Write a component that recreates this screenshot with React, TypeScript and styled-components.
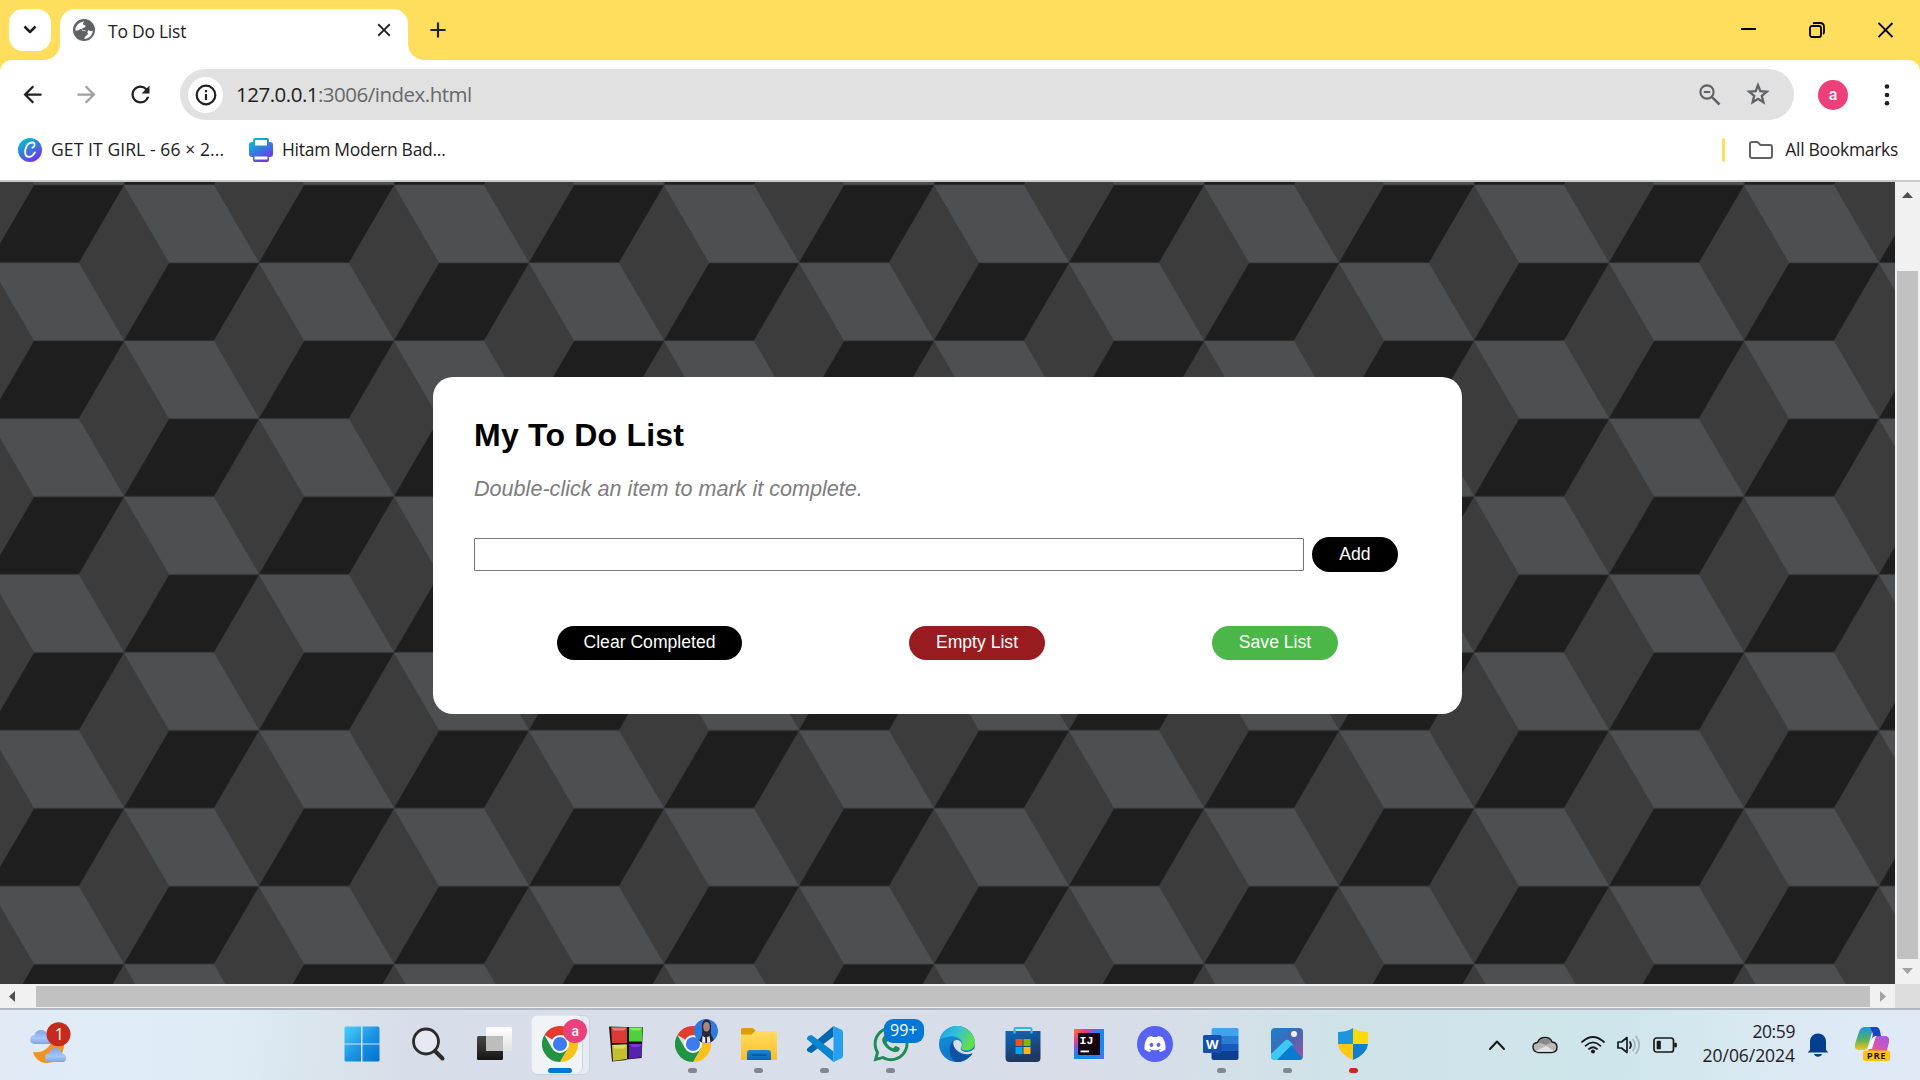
import React from "react";
import styled, { createGlobalStyle, css } from "styled-components";
import { MdAdd, MdArrowBack, MdArrowForward, MdClose, MdRefresh } from "react-icons/md";
import { FaDiscord, FaWhatsapp } from "react-icons/fa";

const ui = `"Open Sans", "Noto Sans", sans-serif`;
const page = `"Liberation Sans", Arial, sans-serif`;
const yellow = "#ffde5d";

const Global = createGlobalStyle`
  * { box-sizing: border-box; }
  body { margin: 0; overflow: hidden; background: #fff; }
  svg { display: block; flex: none; }
`;

const Screen = styled.div`
  width: 1920px;
  height: 1080px;
  display: flex;
  flex-direction: column;
  overflow: hidden;
  font-family: ${ui};
  color: #1f2023;
`;

const TitleBar = styled.header`
  height: 60px;
  flex: none;
  display: flex;
  padding: 9px 0 0 9px;
  background: ${yellow};
`;

const TabSearch = styled.button`
  width: 42px;
  height: 42px;
  padding: 0;
  border: 0;
  border-radius: 14px;
  background: #fff;
  display: grid;
  place-items: center;
`;

const flare = css`
  content: "";
  position: absolute;
  bottom: 0;
  width: 16px;
  height: 16px;
`;

const Tab = styled.div`
  position: relative;
  width: 348px;
  height: 51px;
  margin-left: 9px;
  padding: 0 13px 9px 13px;
  border-radius: 15px 15px 0 0;
  background: #fff;
  display: flex;
  align-items: center;
  color: #5f6368;
  &::before {
    ${flare}
    left: -16px;
    background: radial-gradient(circle at 0 0, transparent 15.5px, #fff 16.2px);
  }
  &::after {
    ${flare}
    right: -16px;
    background: radial-gradient(circle at 100% 0, transparent 15.5px, #fff 16.2px);
  }
`;

const Label = styled.span<{ $size: number; $spacing?: number; $color?: string }>`
  font-size: ${(p) => p.$size}px;
  letter-spacing: ${(p) => p.$spacing ?? 0}px;
  color: ${(p) => p.$color ?? "#1f2023"};
  white-space: nowrap;
  line-height: 24px;
`;

const TabTitle = styled(Label)`
  flex: 1;
  margin-left: 13px;
  padding-top: 2px;
`;

const NewTab = styled.div`
  margin: 8px 0 0 17px;
  color: #1f2023;
`;

const WindowButtons = styled.div`
  margin-left: auto;
  display: flex;
  height: 42px;
`;

const WindowButton = styled.div`
  width: 68.5px;
  display: grid;
  place-items: center;
`;

const ToolbarBack = styled.div`
  flex: none;
  background: ${yellow};
`;

const Toolbar = styled.div`
  height: 69px;
  padding: 0 20px 0 0;
  border-radius: 12px 12px 0 0;
  background: #fff;
  display: flex;
  align-items: center;
`;

const NavButton = styled.div<{ $off?: boolean }>`
  width: 54px;
  display: flex;
  justify-content: center;
  color: ${(p) => (p.$off ? "#a0a0a2" : "#1f2023")};
`;

const NavGroup = styled.div`
  display: flex;
  padding-left: 5px;
  width: 180px;
`;

const Omnibox = styled.div`
  width: 1614px;
  height: 51px;
  border-radius: 26px;
  background: #e1e1e1;
  display: flex;
  align-items: center;
  padding: 0 24px 0 8px;
  color: #5f6164;
`;

const SiteInfo = styled.div`
  width: 35px;
  height: 36px;
  margin-right: 13px;
  border-radius: 50%;
  background: #fff;
  display: grid;
  place-items: center;
`;

const Url = styled(Label)`
  flex: 1;
  padding-bottom: 2px;
  b { font-weight: 400; color: #1f2023; }
`;

const StarSlot = styled.div`
  margin: 0 0 2px 25px;
`;

const Avatar = styled.div<{ $size: number; $font: number }>`
  width: ${(p) => p.$size}px;
  height: ${(p) => p.$size}px;
  border-radius: 50%;
  background: #ec407a;
  color: #fff;
  font: 500 ${(p) => p.$font}px/1 Roboto, sans-serif;
  display: grid;
  place-items: center;
`;

const Profile = styled.div`
  margin: 0 36px 0 24px;
`;

const Bookmarks = styled.nav`
  height: 51px;
  flex: none;
  padding: 0 22px 9px 18px;
  background: #fff;
  display: flex;
  align-items: center;
  ${Label} { padding-bottom: 2px; }
`;

const Bookmark = styled.div<{ $width: number }>`
  width: ${(p) => p.$width}px;
  display: flex;
  align-items: center;
  gap: 9px;
`;

const AllBookmarks = styled.div`
  margin-left: auto;
  display: flex;
  align-items: center;
  gap: 12px;
  &::before {
    content: "";
    flex: none;
    width: 3px;
    height: 24px;
    margin-right: 12px;
    border-radius: 2px;
    background: ${yellow};
  }
`;

const Viewport = styled.div`
  flex: none;
  height: 830px;
  border-top: 2px solid #c8cacc;
  border-bottom: 2px solid #b0b7c0;
  display: grid;
  grid-template: 802px 24px / 1895px 25px;
`;

const Page = styled.main`
  position: relative;
  overflow: hidden;
  background: #3c3c3c;
  padding: 195px 0 0 433px;
`;

const Backdrop = styled.svg`
  position: absolute;
  inset: 0;
`;

const Card = styled.section`
  position: relative;
  width: 1029px;
  height: 337px;
  padding: 38px 64px 0 41px;
  border-radius: 20px;
  background: #fff;
  font-family: ${page};
`;

const Heading = styled.h1`
  margin: 0;
  font-size: 32px;
  line-height: 40px;
  letter-spacing: 0.22px;
  color: #000;
`;

const Hint = styled.p`
  margin: 21px 0 0;
  font-size: 21.6px;
  line-height: 26px;
  font-style: italic;
  color: #7d7d7d;
`;

const EntryRow = styled.div`
  display: flex;
  align-items: center;
  gap: 8px;
  margin-top: 35px;
`;

const Entry = styled.input`
  width: 830px;
  height: 33px;
  padding: 0;
  border: 1px solid #767676;
  border-radius: 1px;
  background: #fff;
`;

const Pill = styled.button<{ $bg?: string; $w: number; $h?: number }>`
  width: ${(p) => p.$w}px;
  height: ${(p) => p.$h ?? 34}px;
  padding: 0 0 ${(p) => (p.$h ? 1 : 3)}px;
  border: 0;
  border-radius: 18px;
  background: ${(p) => p.$bg ?? "#000"};
  color: #fff;
  font: 17.6px/20px ${page};
  white-space: nowrap;
`;

const Actions = styled.div`
  display: flex;
  justify-content: space-between;
  margin: 54px 60px 0 83px;
`;

const VScroll = styled.div`
  background: #f1f1f1;
  display: flex;
  flex-direction: column;
  align-items: center;
  justify-content: space-between;
  padding: 10px 0 10px;
`;

const VThumb = styled.div`
  width: 21px;
  height: 688px;
  margin-top: 64px;
  background: #c1c1c1;
`;

const HScroll = styled.div`
  background: #f1f1f1;
  display: flex;
  align-items: center;
  justify-content: space-between;
  padding: 0 9px;
`;

const HThumb = styled.div`
  width: 1834px;
  height: 21px;
  margin-left: 11px;
  background: #c1c1c1;
`;

const Corner = styled.div`
  background: #dcdcdc;
`;

const Taskbar = styled.footer`
  height: 70px;
  display: flex;
  align-items: center;
  background: linear-gradient(95deg, #e0ebf6 0, #dfecf6 230px, #dae6ee 300px, #d8dee9 410px, #d8deea 800px, #d8dde8 1100px, #cfe3e9 1350px, #cee6eb 1620px, #dbe9f3 1780px, #e0eaf7 1920px);
`;

const Weather = styled.div`
  width: 329px;
  padding: 0 0 5px 28px;
`;

const Apps = styled.div`
  display: flex;
`;

const AppCell = styled.div<{ $active?: boolean }>`
  position: relative;
  width: 66.1px;
  height: 70px;
  display: grid;
  place-items: center;
  padding-bottom: 2px;
  ${(p) =>
    p.$active &&
    css`
      &::before, &::after {
        content: "";
        position: absolute;
        top: 5px;
        left: 4px;
        height: 58px;
        width: 57px;
        border: 1px solid #cbd2e0;
        border-radius: 6px;
        background: rgba(255, 255, 255, 0.4);
      }
      &::after { width: 51px; border-width: 0 1px 0 0; }
    `}
  & > svg { position: relative; z-index: 1; }
`;

const Running = styled.i<{ $w: number; $c: string }>`
  position: absolute;
  z-index: 2;
  bottom: 7px;
  left: calc(50% - ${(p) => p.$w / 2}px);
  width: ${(p) => p.$w}px;
  height: 5px;
  border-radius: 3px;
  background: ${(p) => p.$c};
`;

const AppBadge = styled.div<{ $left: number }>`
  position: absolute;
  z-index: 3;
  top: 9px;
  left: ${(p) => p.$left}px;
`;

const CountBadge = styled.div`
  width: 40px;
  height: 24px;
  border-radius: 9px;
  background: #0078d7;
  color: #fff;
  font: 16px/23px ${ui};
  text-align: center;
`;

const Tray = styled.div`
  margin-left: auto;
  height: 70px;
  padding-right: 29px;
  display: flex;
  align-items: center;
`;

const TrayItem = styled.div<{ $ml?: number }>`
  margin-left: ${(p) => p.$ml ?? 0}px;
`;

const Clock = styled.div`
  width: 118px;
  margin-top: -5px;
  display: flex;
  flex-direction: column;
  align-items: flex-end;
`;

const s = { fill: "none", strokeLinecap: "round" as const, strokeLinejoin: "round" as const };

function Cubes() {
  return (
    <Backdrop width="1895" height="802">
      <defs>
        <pattern id="cubes" width="270" height="155.85" patternUnits="userSpaceOnUse" patternTransform="translate(-11 3)">
          <path fill="#3c3c3c" d="M0 0h270v156H0z" />
          <path fill="#1e1e1e" d="M45 .2H135L90 77.500H0zM180 78.100H270L225 155.400H135z" />
          <path fill="#4e4f51" d="M135 .2H225L270 77.500H180zM0 78.100H90L135 155.400H45z" />
        </pattern>
      </defs>
      <rect width="1895" height="802" fill="url(#cubes)" />
    </Backdrop>
  );
}

const GlobeIcon = () => (
  <svg width="22" height="22">
    <circle cx="11" cy="11" r="11" fill="#5f6368" />
    <path fill="#fff" d="M2.300 11.500C2.300 7 6 2.800 11.500 2.500 9.500 4 9.300 6.300 12.600 6.500c.2 2.700-3.800 1.800-4 4.300 1.600 2.400 6 .4 6.300 3.700-.1 2.300-3.200 2-3.600 5.300 4.600 0 8.300-3.600 8.500-8.300-2 1-3.500.6-4.600-.7.300 1.700-.5 2.400-1.700 1.900-1.500-2.400-5.300-1-5.200-2.900-2 .8-4.200 2.500-6 1.700z" />
  </svg>
);

const ZoomOutIcon = () => (
  <svg width="22" height="22" fill="none" stroke="currentColor" strokeWidth="2.100">
    <circle cx="8" cy="8" r="6.600" />
    <path d="m12.800 12.800 7.700 7.700" strokeWidth="2.500" />
    <path d="M4.800 8h6.400" />
  </svg>
);

const StarIcon = () => (
  <svg width="24" height="24" fill="none" stroke="currentColor" strokeWidth="2.300">
    <path d="m12 3.200 2.300 6 6.500.5-5 4.200 1.600 6.400L12 16.900l-5.400 3.400 1.600-6.400-5-4.200 6.500-.5z" />
  </svg>
);

const ChromeIcon = () => (
  <svg width="36" height="36" viewBox="0 0 36 36">
    <path fill="#e33b2e" d="M18 18 2.4 9A18 18 0 0 1 33.6 9z" />
    <path fill="#fbc116" d="M18 9h15.6A18 18 0 0 1 18 36l7.8-13.5z" />
    <path fill="#229342" d="M2.4 9A18 18 0 0 0 18 36l7.8-13.5L18 18l-7.8 4.5z" />
    <circle cx="18" cy="18" r="9" fill="#fff" />
    <circle cx="18" cy="18" r="7.1" fill="#3d7cf0" />
  </svg>
);

const StartIcon = () => (
  <svg width="36" height="36">
    <defs>
      <linearGradient id="st" x1="0" y1="0" x2="36" y2="36" gradientUnits="userSpaceOnUse">
        <stop stopColor="#4fd0ff" />
        <stop offset=".5" stopColor="#1c96e2" />
        <stop offset="1" stopColor="#0070d2" />
      </linearGradient>
    </defs>
    <path fill="url(#st)" d="M2 .5h15v17H.5V2Q.5.5 2 .5zM18.500 .5H34q1.500 0 1.500 1.500v15.500h-17zM.5 18.500H17v17H2Q.5 35.500.5 34zM18.500 18.500h17V34q0 1.500-1.500 1.500h-15.500z" />
  </svg>
);

const SearchIcon = () => (
  <svg width="36" height="36" {...s} stroke="#2b2b2b">
    <circle cx="16" cy="15.500" r="12.500" strokeWidth="2.800" fill="#e6e9f2" />
    <path d="m25.500 25.500 7 7" strokeWidth="4" />
  </svg>
);

const TaskViewIcon = () => (
  <svg width="36" height="36">
    <defs>
      <linearGradient id="tv" x2="0" y2="1"><stop stopColor="#494845" /><stop offset="1" stopColor="#151515" /></linearGradient>
      <linearGradient id="tw" x2="0" y2="1"><stop stopColor="#fff" /><stop offset="1" stopColor="#e2e2e2" /></linearGradient>
    </defs>
    <rect x="1" y="10" width="26" height="24" rx="1.500" fill="url(#tv)" />
    <rect x="10" y="1" width="26" height="24" rx="1.500" fill="url(#tw)" />
    <path fill="#bdbdbd" d="M10 10h17v15H10z" />
  </svg>
);

const BlocksIcon = () => (
  <svg width="36" height="36">
    <path fill="#171310" d="M1 .5 17.500 1l1 33L4 35.500z" />
    <path fill="#171310" d="M17 1h18l-1.500 31-15 1.500z" />
    <path fill="#da3a35" d="M3 1.500h16v15.500H4z" />
    <path fill="#ee7770" d="M3 1.500h16l-3 3H6z" />
    <path fill="#4fd03c" d="M21 1.500h13.500l-.5 14H21z" />
    <path fill="#82ea66" d="M21 1.500h13.500l-3 3H24z" />
    <path fill="#c3c02d" d="m4 19 15-.5V33L5 35z" />
    <path fill="#dedd61" d="m4 19 15-.5-3 4H7z" />
    <path fill="#5424ae" d="M21 18h13l-.5 13L21 33z" />
    <path fill="#6f3ed0" d="M21 18h13l-3 3h-7z" />
  </svg>
);

const FolderIcon = () => (
  <svg width="36" height="36">
    <defs>
      <linearGradient id="fo" x2="0" y2="1"><stop stopColor="#ffdc61" /><stop offset="1" stopColor="#fdbe28" /></linearGradient>
      <linearGradient id="fb" x2="0" y2="1"><stop stopColor="#1687d9" /><stop offset="1" stopColor="#0b65b4" /></linearGradient>
    </defs>
    <path fill="#dc9e08" d="M0 9V3.500Q0 2 1.500 2H11q1 0 2 1l3 3-4 4z" />
    <path fill="url(#fo)" d="M0 8.500h10.500L14 5h20.500Q36 5 36 6.500V34H0z" />
    <path fill="url(#fb)" d="M6 34v-7q0-3 3-3h18q3 0 3 3v7z" />
    <path stroke="#0a4f92" strokeWidth="1.500" d="M10.500 29h15" />
  </svg>
);

const CodeIcon = () => (
  <svg width="36" height="36">
    <path fill="#0067ad" d="M26.500 0v10.500L4.500 27 1.500 26 0 24.500q-.8-1 .3-2z" />
    <path fill="#0a86cf" d="M26.500 36V25.500L4.500 9 1.500 10 0 11.500q-.8 1 .3 2z" />
    <path fill="#26a0ee" d="m26.500 0 8 3.700q1.500.8 1.500 2.500v23.600q0 1.700-1.500 2.500l-8 3.700z" />
  </svg>
);

const EdgeIcon = () => (
  <svg width="36" height="36">
    <defs>
      <linearGradient id="e1" x2="1" y2=".4"><stop stopColor="#1e9be0" /><stop offset=".5" stopColor="#2fc2da" /><stop offset="1" stopColor="#65dd4b" /></linearGradient>
      <linearGradient id="e2" x2=".4" y2="1"><stop stopColor="#1594db" /><stop offset="1" stopColor="#1271c9" /></linearGradient>
    </defs>
    <circle cx="18" cy="18" r="18" fill="url(#e2)" />
    <path fill="url(#e1)" d="M.4 14.500A18 18 0 0 1 36 16.500c0 5-4 8-8.500 8-4 0-5.500-1.500-5.500-2.500 1-1 1.300-2 1.300-3.500 0-6-7-9-12.300-8C6 11.500 2 12 .4 14.500z" />
    <path fill="#10529f" d="M14.500 14.500C9 19 9 30 16.500 35.900 23 37 31 32 34 27c-7 3.500-19.500 1.500-19.500-12.500z" />
    <path fill="#d8dde8" d="M17.500 14c5 0 6.500 4.500 4.500 7.500-1.500 2.500 2.500 5 6.500 4.500 2.500-.3 5-1.500 7-3.500l1 6-3.500-1.200C24 31 12.500 23 14.500 15.500q1.200-1.500 3-1.500z" />
  </svg>
);

const StoreIcon = () => (
  <svg width="36" height="36">
    <defs><linearGradient id="so" x2=".3" y2="1"><stop stopColor="#0a6abf" /><stop offset="1" stopColor="#21365e" /></linearGradient></defs>
    <path fill="none" stroke="#2cb6ec" strokeWidth="2" d="M9.500 8V3q0-1 1-1h15q1 0 1 1v5" />
    <path fill="url(#so)" d="M.5 5h8v2.500h2V5h15v2.500h2V5h8v27q0 4-4 4h-27q-4 0-4-4z" />
    <path fill="#f1511b" d="M10.500 13h7v7h-7z" /><path fill="#80bb02" d="M18.500 13h7v7h-7z" />
    <path fill="#05a6f0" d="M10.500 21h7v7h-7z" /><path fill="#ffba08" d="M18.500 21h7v7h-7z" />
  </svg>
);

const IdeaIcon = () => (
  <svg width="36" height="36">
    <defs><linearGradient id="ij" x2="1" y2="1"><stop stopColor="#fc801d" /><stop offset=".2" stopColor="#f13a7c" /><stop offset=".34" stopColor="#8b4fe6" /><stop offset=".45" stopColor="#1688f5" /><stop offset=".85" stopColor="#1f86f7" /><stop offset="1" stopColor="#7a5bea" /></linearGradient></defs>
    <path fill="url(#ij)" d="M3 3h30v30H3z" />
    <path fill="#160510" d="M7 7h22v22H7z" />
    <text x="8.500" y="18" fill="#fff" fontFamily="Liberation Mono, monospace" fontWeight="700" fontSize="11.500">IJ</text>
    <path fill="#fff" d="M9.500 24.500h8.500v1.800H9.500z" />
  </svg>
);

const DiscordIcon = () => (
  <svg width="36" height="36">
    <circle cx="18" cy="18" r="18" fill="#5662f3" />
    <FaDiscord x="6.500" y="6.500" size={23} color="#fff" />
  </svg>
);

const WordIcon = () => (
  <svg width="36" height="36">
    <path fill="#41a3ee" d="M8.500 4Q8.500 2 10.500 2h23.500q1.500 0 1.500 1.500V10h-27z" />
    <path fill="#2b7cd3" d="M8.500 10h27v8h-27z" /><path fill="#185abd" d="M8.500 18h27v7h-27z" />
    <path fill="#103f91" d="M8.500 25h27v7q0 2-2 2h-23q-2 0-2-2z" />
    <rect y="9" width="18.500" height="18" rx="1.500" fill="#174fae" />
    <text x="9.200" y="23" textAnchor="middle" fill="#fff" fontFamily="Open Sans, sans-serif" fontWeight="700" fontSize="13">W</text>
  </svg>
);

const PhotosIcon = () => (
  <svg width="36" height="36">
    <defs>
      <linearGradient id="ph" x2="1" y2="1"><stop stopColor="#1782cd" /><stop offset=".5" stopColor="#4568b5" /><stop offset="1" stopColor="#a44fa0" /></linearGradient>
      <clipPath id="pc"><rect x="2" y="2" width="32" height="32" rx="4" /></clipPath>
    </defs>
    <g clipPath="url(#pc)">
      <path fill="url(#ph)" d="M2 2h32v32H2z" />
      <path fill="#0a7bd2" d="m7 34 12-13.500q2-2 4 0L34 33v2z" />
      <path fill="#3ccaf4" d="m2 28 13.500-13q2.500-2.500 5 0l4.500 4.500q-2-1-4 1L8 34H2z" />
    </g>
    <circle cx="25" cy="8" r="3" fill="#f1f4fb" />
  </svg>
);

const ShieldIcon = () => (
  <svg width="36" height="36">
    <path fill="#1e96dc" d="M18 2Q12 6 3 6v12h15z" /><path fill="#ffda08" d="M18 2q6 4 15 4v12H18z" />
    <path fill="#ffc814" d="M3 18q1 10 15 16V18z" /><path fill="#0f80cf" d="M33 18q-1 10-15 16V18z" />
  </svg>
);

const Portrait = () => (
  <svg width="24" height="24">
    <defs><clipPath id="po"><circle cx="12" cy="12" r="12" /></clipPath></defs>
    <g clipPath="url(#po)">
      <path fill="#2d7be0" d="M0 0h24v24H0z" />
      <path fill="#2a2a36" d="M8 16V6q.5-5.500 4.500-5.500T17 6v9l4 9H4z" />
      <ellipse cx="12.500" cy="7.800" rx="3.300" ry="4.800" fill="#ab877b" />
      <path fill="#e8edf5" d="m8.500 17 3.500 2 3.500-2 1 7H8z" /><path fill="#1c2233" d="M11.300 18.500h1.800V24h-1.800z" />
    </g>
  </svg>
);

const WeatherIcon = () => (
  <svg width="44" height="44">
    <defs><linearGradient id="cl" x2="0" y2="1"><stop stopColor="#7fa6e8" /><stop offset=".6" stopColor="#a9c6f6" /><stop offset="1" stopColor="#7ea2e3" /></linearGradient></defs>
    <path fill="#f4921f" d="M5 31q14 2 20-13l11 0q1 10-3 16-6 9-16 8Q7 40 5 31z" />
    <path fill="url(#cl)" d="M6 23q-4-1-4-4.500T6.500 14Q8 9 13 9q6 0 6.500 6 5 .5 5 4.500T21 23z" />
    <path fill="url(#cl)" d="M21 41q-4-.5-4-4.500t4.500-4.500q1-5 6-5 5.500 0 6 5.500 4.500 0 4.500 4.500T34 41z" />
    <circle cx="30.500" cy="13.300" r="12" fill="#c42b1c" />
    <text x="31.300" y="19" textAnchor="middle" fill="#fff" fontFamily="Open Sans, sans-serif" fontSize="16">1</text>
  </svg>
);

const CanvaIcon = () => (
  <svg width="24" height="24">
    <defs><linearGradient id="ca" x1=".2" x2=".8" y2="1"><stop stopColor="#00c4cc" /><stop offset=".5" stopColor="#3976e0" /><stop offset="1" stopColor="#7d2ae8" /></linearGradient></defs>
    <circle cx="12" cy="12" r="12" fill="url(#ca)" />
    <path {...s} stroke="#fff" strokeWidth="1.800" d="M14.300 9.600c2.600-.4 3.400-4.900.2-5.100C9.500 4.300 6.200 11 7.300 15.700c1 4.700 6.800 4 9.600-1.300" />
  </svg>
);

const PrintIcon = () => (
  <svg width="24" height="24">
    <path fill="url(#ca)" d="M4 2q0-2 2-2h12q2 0 2 2v2h1q3 0 3 3v9q0 3-3 3h-1v3q0 2-2 2H6q-2 0-2-2v-3H3q-3 0-3-3V7q0-3 3-3h1z" />
    <path fill="#fff" d="M6 2h12v5.500H6zM5.500 18.500h13v3h-13z" />
  </svg>
);

const CopilotIcon = () => (
  <svg width="36" height="36">
    <defs>
      <linearGradient id="c1" x2="0" y2="1"><stop stopColor="#1499ea" /><stop offset=".5" stopColor="#4eae6a" /><stop offset="1" stopColor="#f2c613" /></linearGradient>
      <linearGradient id="c2" x1="1" x2="0" y2="1"><stop stopColor="#9b5bf0" /><stop offset=".5" stopColor="#d254b5" /><stop offset="1" stopColor="#f5714e" /></linearGradient>
    </defs>
    <path fill="url(#c1)" d="M10 0h11q-3 1-4.500 7L13 19q-1 4-5 4H4q-5 0-4-6L4 5q1.500-5 6-5z" />
    <path fill="#1746c0" d="M15 0h6q3 0 4 4l1 5h-4q-4 0-5.500 4L18 7z" />
    <path fill="url(#c2)" d="M22 9h8q5 0 4 6l-2 8q-1 3-5 3H8q5 0 6-4h3l3-10q.5-2 2-3z" />
    <path fill="#f4f6fa" d="m18 10 3-1-4 11q-.5 2-4 2z" />
    <rect x="8" y="23.500" width="27" height="10.500" rx="2" fill="#ffc20e" />
    <text x="21.500" y="32.300" textAnchor="middle" fill="#1a1a1a" fontFamily="Open Sans, sans-serif" fontWeight="700" fontSize="9.500" letterSpacing=".6">PRE</text>
  </svg>
);

const apps: { icon: React.ReactNode; active?: boolean; run?: string; badge?: React.ReactNode; left?: number }[] = [
  { icon: <StartIcon /> },
  { icon: <SearchIcon /> },
  { icon: <TaskViewIcon /> },
  { icon: <ChromeIcon />, active: true, run: "#0078d7", badge: <Avatar $size={24} $font={14}>a</Avatar>, left: 36 },
  { icon: <BlocksIcon /> },
  { icon: <ChromeIcon />, run: "#83868e", badge: <Portrait />, left: 35 },
  { icon: <FolderIcon />, run: "#83868e" },
  { icon: <CodeIcon />, run: "#83868e" },
  { icon: <FaWhatsapp size={40} color="#1d8b57" />, run: "#83868e", badge: <CountBadge>99+</CountBadge>, left: 26 },
  { icon: <EdgeIcon /> },
  { icon: <StoreIcon /> },
  { icon: <IdeaIcon /> },
  { icon: <DiscordIcon /> },
  { icon: <WordIcon />, run: "#83868e" },
  { icon: <PhotosIcon />, run: "#83868e" },
  { icon: <ShieldIcon />, run: "#c42b1c" },
];

export default function App() {
  return (
    <Screen>
      <Global />
      <TitleBar>
        <TabSearch>
          <svg width="14" height="10" {...s} stroke="#1f2023" strokeWidth="2.500" strokeLinecap="butt"><path d="m1.500 1.500 5.500 5.500 5.500-5.500" /></svg>
        </TabSearch>
        <Tab>
          <GlobeIcon />
          <TabTitle $size={17.5} $spacing={-0.25}>To Do List</TabTitle>
          <MdClose size={22} color="#1f2023" />
        </Tab>
        <NewTab><MdAdd size={26} /></NewTab>
        <WindowButtons>
          <WindowButton><svg width="16" height="16"><path d="M0 6h15v2H0z" /></svg></WindowButton>
          <WindowButton>
            <svg width="16" height="16" fill="none" stroke="#000" strokeWidth="1.800"><rect x="1" y="4" width="11" height="11" rx="2" /><path d="M4 1.500q.5-.5 2-.5h5q4 0 4 4v5q0 1.500-1 2" /></svg>
          </WindowButton>
          <WindowButton><svg width="16" height="16" stroke="#000" strokeWidth="1.800"><path d="m.5 1 14 14M14.500 1 .5 15" /></svg></WindowButton>
        </WindowButtons>
      </TitleBar>
      <ToolbarBack>
        <Toolbar>
          <NavGroup>
            <NavButton><MdArrowBack size={27} /></NavButton>
            <NavButton $off><MdArrowForward size={27} /></NavButton>
            <NavButton><MdRefresh size={27} /></NavButton>
          </NavGroup>
          <Omnibox>
            <SiteInfo>
              <svg width="22" height="22" fill="none" stroke="#1f2023" strokeWidth="2.200"><circle cx="11" cy="11" r="9.300" /><path d="M11 10v6M11 6v2.200" /></svg>
            </SiteInfo>
            <Url $size={20.5} $spacing={-0.5} $color="#66686b"><b>127.0.0.1</b>:3006/index.html</Url>
            <ZoomOutIcon />
            <StarSlot><StarIcon /></StarSlot>
          </Omnibox>
          <Profile><Avatar $size={30} $font={16}>a</Avatar></Profile>
          <svg width="6" height="24" fill="#1f2023"><circle cx="3" cy="3.500" r="2.300" /><circle cx="3" cy="12" r="2.300" /><circle cx="3" cy="20.300" r="2.300" /></svg>
        </Toolbar>
      </ToolbarBack>
      <Bookmarks>
        <Bookmark $width={231}><CanvaIcon /><Label $size={17.5} $spacing={0.1}>GET IT GIRL - 66 × 2...</Label></Bookmark>
        <Bookmark $width={220}><PrintIcon /><Label $size={17.5} $spacing={-0.28}>Hitam Modern Bad...</Label></Bookmark>
        <AllBookmarks>
          <svg width="24" height="18" {...s} stroke="#5f6164" strokeWidth="2"><path d="M1 15V3q0-2 2-2h5.500l3 3H21q2 0 2 2v9q0 2-2 2H3q-2 0-2-2z" /></svg>
          <Label $size={17.5} $spacing={-0.3}>All Bookmarks</Label>
        </AllBookmarks>
      </Bookmarks>

      <Viewport>
        <Page>
          <Cubes />
          <Card>
            <Heading>My To Do List</Heading>
            <Hint>Double-click an item to mark it complete.</Hint>
            <EntryRow>
              <Entry aria-label="New item" />
              <Pill $w={86} $h={35}>Add</Pill>
            </EntryRow>
            <Actions>
              <Pill $w={185}>Clear Completed</Pill>
              <Pill $w={136} $bg="#981b1f">Empty List</Pill>
              <Pill $w={126} $bg="#4bb749">Save List</Pill>
            </Actions>
          </Card>
        </Page>
        <VScroll>
          <svg width="11" height="6"><path fill="#505050" d="M0 6 5.500 0 11 6z" /></svg>
          <VThumb />
          <svg width="11" height="6"><path fill="#a3a3a3" d="M0 0h11L5.500 6z" /></svg>
        </VScroll>
        <HScroll>
          <svg width="6" height="11"><path fill="#505050" d="M6 0v11L0 5.500z" /></svg>
          <HThumb />
          <svg width="6" height="11"><path fill="#a3a3a3" d="M0 0v11l6-5.500z" /></svg>
        </HScroll>
        <Corner />
      </Viewport>

      <Taskbar>
        <Weather><WeatherIcon /></Weather>
        <Apps>
          {apps.map((a, i) => (
            <AppCell key={i} $active={a.active}>
              {a.icon}
              {a.run && <Running $w={a.active ? 24 : 9} $c={a.run} />}
              {a.badge && <AppBadge $left={a.left ?? 0}>{a.badge}</AppBadge>}
            </AppCell>
          ))}
        </Apps>
        <Tray>
          <TrayItem><svg width="18" height="12" {...s} stroke="#1a1a1a" strokeWidth="2"><path d="m2 10 7-7.500 7 7.500" /></svg></TrayItem>
          <TrayItem $ml={26}>
            <svg width="26" height="18">
              <path fill="#b9b9b9" stroke="#1a1a1a" strokeWidth="1.400" d="M6.500 16.500q-5-.5-5.500-5t4.500-5Q7.500 1.500 13 1.500T20 6q5 .5 5 5.200t-5 5.300z" />
              <path fill="#8b8b8b" d="M6.500 6.500Q8.500 2.200 13 2.200t6.300 4.300L14 9z" /><path fill="#e3e3e3" d="m4 15 10-5 8 5-2 .8H6.500z" />
            </svg>
          </TrayItem>
          <TrayItem $ml={23}>
            <svg width="24" height="18" {...s} stroke="#1a1a1a" strokeWidth="1.700"><path d="M1 6q11-10 22 0M4.500 9.800q7.500-6.800 15 0M8 13q4-3.500 8 0" /><circle cx="12" cy="15.500" r="1.200" fill="#1a1a1a" /></svg>
          </TrayItem>
          <TrayItem $ml={12}>
            <svg width="24" height="20" {...s} stroke="#1a1a1a" strokeWidth="1.700"><path d="M1 7v6h3.500l5.500 4.500v-15L4.500 7zM13 7q2 3 0 6" /><path stroke="#a5b6bc" d="M16 4.500q4 5.500 0 11M19 1.500q6.500 8.500 0 17" /></svg>
          </TrayItem>
          <TrayItem $ml={12}>
            <svg width="24" height="16" {...s} stroke="#1a1a1a" strokeWidth="1.700"><rect x="1" y="1" width="19.500" height="14" rx="2.500" /><path fill="#1a1a1a" d="M4.500 4.500H7v7H4.500zM22 6.500h1v3h-1z" /></svg>
          </TrayItem>
          <Clock>
            <Label $size={17.5} $spacing={-0.4}>20:59</Label>
            <Label $size={17.5} $spacing={-0.05}>20/06/2024</Label>
          </Clock>
          <TrayItem $ml={13}>
            <svg width="20" height="24" fill="#003e92"><path d="M2 17V8q1-7.500 8-7.500T18 8v9l2 2v.500H0V19zM6 21h8q-1 2.800-4 2.800T6 21z" /></svg>
          </TrayItem>
          <TrayItem $ml={27}><CopilotIcon /></TrayItem>
        </Tray>
      </Taskbar>
    </Screen>
  );
}
